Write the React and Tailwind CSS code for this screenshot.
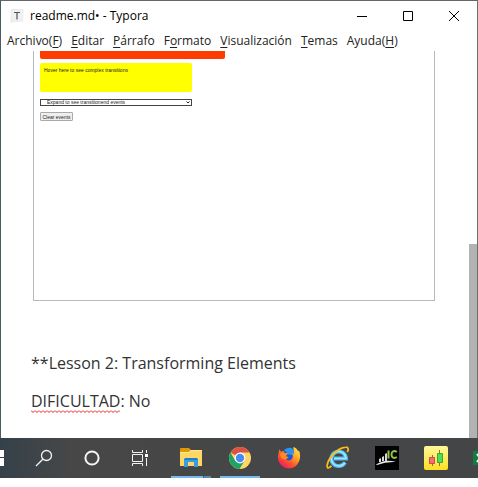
import React from "react";

const menus = [
  ["Archivo(", "F", ")"],
  ["", "E", "ditar"],
  ["", "P", "árrafo"],
  ["F", "o", "rmato"],
  ["", "V", "isualización"],
  ["", "T", "emas"],
  ["Ayuda(", "H", ")"],
];

function TitleBar() {
  return (
    <header className="flex h-[30px] shrink-0 items-center pl-2">
      <svg width="16" height="16" viewBox="0 0 16 16" aria-hidden="true">
        <path d="M2 1 14.5 1.5 14 13.5 1.5 14.5Z" fill="#e6e6e6" />
        <path d="M1 2.5 13.5 1 14.5 13 3 14Z" fill="#f0f0f0" />
        <path d="M5 4.5h6M8 4.5v7" stroke="#555" fill="none" strokeWidth="1.200" />
      </svg>
      <h1 className="ml-[5px] flex-1 text-xs">readme.md• - Typora</h1>
      <button aria-label="Minimizar" className="flex h-full w-[46px] items-center justify-center">
        <svg width="10" height="10" aria-hidden="true"><path d="M0 5.5h10" stroke="#000" /></svg>
      </button>
      <button aria-label="Maximizar" className="flex h-full w-[46px] items-center justify-center">
        <svg width="10" height="10" aria-hidden="true"><path d="M.5.5h9v9h-9z" stroke="#000" fill="none" /></svg>
      </button>
      <button aria-label="Cerrar" className="flex h-full w-[46px] items-center justify-center">
        <svg width="10" height="10" aria-hidden="true"><path d="M0 0l10 10M10 0L0 10" stroke="#000" /></svg>
      </button>
    </header>
  );
}

function MenuBar() {
  return (
    <nav className="flex h-5 shrink-0 items-center gap-[9px] pl-[6px] text-xs text-[#222]">
      {menus.map(([before, key, after]) => (
        <button key={before + key + after} className="whitespace-nowrap">
          {before}
          <span className="underline decoration-1 underline-offset-2">{key}</span>
          {after}
        </button>
      ))}
    </nav>
  );
}

function Misspelled({ children }) {
  return (
    <span className="relative inline-block">
      {children}
      <svg className="absolute bottom-0 left-0 h-[3px] w-full" aria-hidden="true">
        <defs>
          <pattern id="squiggle" width="4" height="3" patternUnits="userSpaceOnUse">
            <path d="M0 .5 2 2.500 4 .5" stroke="#e81c1c" fill="none" />
          </pattern>
        </defs>
        <rect width="100%" height="3" fill="url(#squiggle)" />
      </svg>
    </span>
  );
}

function Document() {
  return (
    <main className="flex min-h-0 flex-1 overflow-hidden">
      <article className="min-w-0 flex-1 pl-[30px] pr-[34px] text-base text-[#333]">
        <figure className="ml-[2px] h-[250px] border border-t-0 border-[#b4bac0] pl-[6px] font-['Liberation_Sans',sans-serif] text-[5px] leading-[6px] text-[#222]">
          <div className="h-2 w-[185px] rounded-b-xs bg-[#ff3c00]" />
          <div className="mt-1 h-[29px] w-[152px] rounded-xs bg-[#ffff00] pl-1 pt-1">
            Hover here to see complex transitions
          </div>
          <div className="mt-[7px] grid w-[152px] items-center">
            <select
              aria-label="Expand to see transitionend events"
              className="col-start-1 row-start-1 h-[7px] appearance-none border border-[#444] bg-white pl-[6px] leading-[5px]"
            >
              <option>Expand to see transitionend events</option>
            </select>
            <svg className="pointer-events-none col-start-1 row-start-1 mr-[2px] justify-self-end" width="4" height="3" aria-hidden="true">
              <path d="M.5.5 2 2 3.5.5" stroke="#222" fill="none" />
            </svg>
          </div>
          <button className="mt-[6px] flex h-[9px] w-[33px] items-center justify-center whitespace-nowrap rounded-[1px] border border-[#aaa] bg-[#efefef]">
            Clear events
          </button>
        </figure>
        <p className="mt-[50px] leading-6">**Lesson 2: Transforming Elements</p>
        <p className="mt-[14px] leading-6">
          <Misspelled>DIFICULTAD</Misspelled>: No
        </p>
      </article>
      <div className="mt-[193px] w-2 bg-[#b2b2b2]" />
    </main>
  );
}

function SearchIcon() {
  return (
    <svg width="18" height="18" viewBox="0 0 18 18" fill="none" stroke="#f2f2f2" strokeWidth="1.3" aria-hidden="true">
      <circle cx="11.5" cy="6.5" r="5" />
      <path d="M7.8 10.2 1 17" />
    </svg>
  );
}

function CortanaIcon() {
  return (
    <svg width="16" height="16" aria-hidden="true">
      <circle cx="8" cy="8" r="6.6" fill="none" stroke="#f4f4f4" strokeWidth="2" />
    </svg>
  );
}

function TaskViewIcon() {
  return (
    <svg width="16" height="16" fill="none" stroke="#f2f2f2" aria-hidden="true">
      <path d="M.5 0v2.5h10V0M.5 4.5h10v7H.5zM.5 16v-2.5h10V16M14.5 0v3M14.5 8v8" />
      <path d="M13 4h3v3h-3z" fill="#fff" stroke="none" />
    </svg>
  );
}

function FolderIcon() {
  return (
    <svg width="22" height="20" viewBox="0 0 22 20" aria-hidden="true">
      <path d="M0 1q0-1 1-1h8l2 2v4H0z" fill="#dd9a07" />
      <path d="M0 4h9l2-2h10q1 0 1 1v15H0z" fill="#ffd765" />
      <path d="M0 4h9l2-2h11v1H11L9 5H0z" fill="#ffe595" />
      <path d="M4 19v-7q0-2 2-2h10q2 0 2 2v7h-4v-5H8v5z" fill="#3b9be3" />
      <path d="M5 10h12l1 2H4z" fill="#1c7fc8" />
    </svg>
  );
}

function ChromeIcon() {
  return (
    <svg width="24" height="24" viewBox="0 0 24 24" aria-hidden="true">
      <circle cx="12" cy="12" r="11" fill="#ffd666" />
      <path d="M12 12 2.5 6.5A11 11 0 0 1 21.5 6.5H12z" fill="#de5145" />
      <path d="M2.5 6.5A11 11 0 0 0 11.5 23L16.5 14.7 12 12 7.2 14.7z" fill="#1ea362" />
      <circle cx="12" cy="12" r="5.4" fill="#fff" />
      <circle cx="12" cy="12" r="4.2" fill="#4a8af4" />
    </svg>
  );
}

function FirefoxIcon() {
  return (
    <svg width="24" height="24" viewBox="0 0 24 24" aria-hidden="true">
      <defs>
        <linearGradient id="fox" x1="1" y1="0" x2="0.2" y2="1">
          <stop offset="0" stopColor="#fff04a" />
          <stop offset=".35" stopColor="#ffb02b" />
          <stop offset=".65" stopColor="#ff5a27" />
          <stop offset="1" stopColor="#e9136b" />
        </linearGradient>
      </defs>
      <circle cx="12" cy="11" r="8.500" fill="#1f55d0" />
      <path d="M7 4q5-4 9-1l2 5-6 1z" fill="#2a93ee" />
      <path d="M2.300 3.500 4.500 6 6 4.600 7.500 7l3.500.5-2.600 2.500 3 1-2.400 1.800c1 2.200 4.500 2.300 6 0 1.500-2.400.8-4.600-.5-5.800 1.400.1 2 .8 2.500 1.400C17.500 5 16 3.500 16.500 1c2.500 1 4 2.500 4.500 4.200l1-.8c3.500 8.500-1.500 18.100-10 18.100C4.500 22.500-.5 15.500 1.300 8z" fill="url(#fox)" />
      <path d="M3 8l3-1.500 5 1.300-2.600 2.600 3.300.8-3.200 2.200q-3 0-4.500-2z" fill="#ff8b23" />
    </svg>
  );
}

function ExplorerIcon() {
  return (
    <svg width="24" height="24" viewBox="0 0 24 24" fill="none" aria-hidden="true">
      <path d="M19 16.500A7.300 7.300 0 1 1 20 12.500H8" stroke="#4dbcf0" strokeWidth="4" />
      <path d="M19 16.500A7.300 7.300 0 1 1 20 12.500H8" stroke="#a8e6ff" strokeWidth="1.500" />
      <path d="M5.500 20C2 23 .5 22.500 1.400 18 3.500 10 13 1.500 20 1.200c3-.2 2.300 3 1.300 5" stroke="#f6bd1c" strokeWidth="1.800" />
    </svg>
  );
}

function MarketsIcon() {
  return (
    <svg width="24" height="24" viewBox="0 0 24 24" aria-hidden="true">
      <path d="M0 0h24v24H0z" fill="#030303" />
      <path d="M1 18.500q9-6 20-2.500-10-.5-19 3z" fill="#e8e8e8" />
      <path d="M4 16v-3l2-1v4zM7 15v-4l2-1v5zM10 15V8l2-1v8z" fill="#d8d8d8" />
      <path d="M13.500 4.500v8" stroke="#94c83d" strokeWidth="2" />
      <path d="M21.800 6C19 4 16.500 5.500 16.500 8.500s2.500 4.500 5.300 2.500" stroke="#8fc649" strokeWidth="2" fill="none" />
    </svg>
  );
}

function CandlesIcon() {
  return (
    <svg width="24" height="24" viewBox="0 0 24 24" aria-hidden="true">
      <defs>
        <linearGradient id="candleBg" x1="0" y1="0" x2="0" y2="1">
          <stop offset="0" stopColor="#fff79a" />
          <stop offset="1" stopColor="#ffe020" />
        </linearGradient>
      </defs>
      <rect width="24" height="24" rx="2" fill="url(#candleBg)" />
      <path d="M8.500 9v11M15.500 4v16" stroke="#7d7a35" />
      <path d="M5.500 11.500h5v6h-5z" fill="#f0707a" stroke="#cc4a52" />
      <path d="M13.500 7.500h5v9h-5z" fill="#53db5c" stroke="#35a83e" />
    </svg>
  );
}

function ExcelIcon() {
  return (
    <svg width="24" height="24" viewBox="0 0 24 24" aria-hidden="true">
      <path d="M6 1h17v22H6z" fill="#21a366" />
      <path d="M0 5h14v14H0z" fill="#107c41" />
      <path d="m4 8 6 8M10 8l-6 8" stroke="#fff" strokeWidth="2" />
    </svg>
  );
}

const tools = [
  ["Buscar", SearchIcon],
  ["Cortana", CortanaIcon],
  ["Vista de tareas", TaskViewIcon],
];

const apps = [
  ["Explorador de archivos", FolderIcon, "grouped"],
  ["Chrome", ChromeIcon, "open"],
  ["Firefox", FirefoxIcon],
  ["Internet Explorer", ExplorerIcon],
  ["IC Markets", MarketsIcon],
  ["MetaTrader", CandlesIcon],
  ["Excel", ExcelIcon],
];

function Taskbar() {
  return (
    <footer className="flex h-10 overflow-hidden bg-linear-to-r from-[#35414a] via-[#474747] via-15% to-[#434547]">
      <button aria-label="Inicio" className="flex w-5 shrink-0 items-center">
        <svg width="4" height="16" aria-hidden="true"><path d="M0 0h4v7H0zM0 8h4v8H0z" fill="#fff" /></svg>
      </button>
      {tools.map(([name, Icon]) => (
        <button key={name} aria-label={name} className="flex w-12 shrink-0 items-center justify-center">
          <Icon />
        </button>
      ))}
      <div className="ml-[3px] flex gap-px">
        {apps.map(([name, Icon, state]) => (
          <button key={name} aria-label={name} className="grid w-12 shrink-0 grid-rows-[38px_2px] px-1">
            <span className="flex items-center justify-center pt-[2px]"><Icon /></span>
            {state && (
              <span className="flex">
                <span className="flex-1 bg-[#76b9ed]" />
                {state === "grouped" && <span className="w-2 border-l border-[#41627c] bg-[#5a89ae]" />}
              </span>
            )}
          </button>
        ))}
      </div>
    </footer>
  );
}

export default function App() {
  return (
    <div className="min-h-screen bg-white font-['Open_Sans','Noto_Sans',sans-serif] text-black">
      <div className="flex h-[438px] flex-col border-x border-t border-x-[#4b5962] border-r-[#6d6d6d] border-t-[#66666a] bg-white">
        <TitleBar />
        <MenuBar />
        <Document />
      </div>
      <Taskbar />
    </div>
  );
}
